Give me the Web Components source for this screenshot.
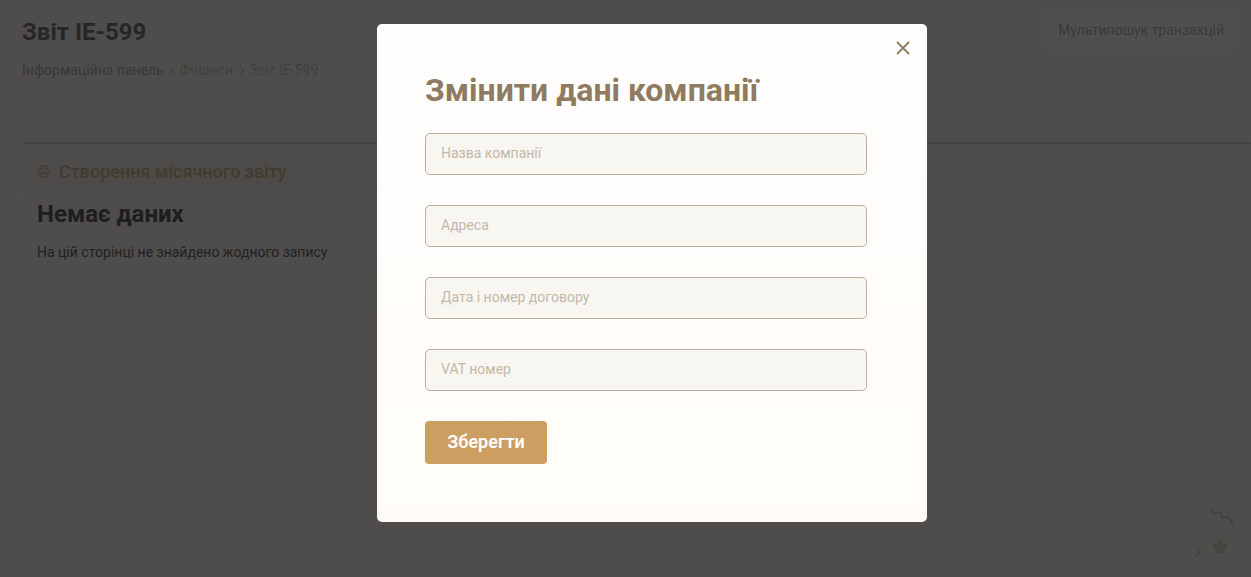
<!DOCTYPE html>
<html lang="uk">
<head>
<meta charset="utf-8">
<title>Звіт IE-599</title>
<style>
  html, body { margin: 0; height: 100%; }
  body { background: #fbf9f5; font-family: Roboto, "Liberation Sans", sans-serif; overflow: hidden; }
</style>
</head>
<body>
<report-page></report-page>
<company-modal></company-modal>

<script>
class PageHeader extends HTMLElement {
  constructor() {
    super();
    this.shadowDOM = this.attachShadow({mode: 'open'});
    this.shadowDOM.innerHTML = `
    <style>
      :host {
        display: flex;
        justify-content: space-between;
        align-items: flex-start;
        height: 142px;
        box-sizing: border-box;
        padding-top: 13px;
      }
      h1 {
        margin: 0;
        font-size: 24px;
        line-height: 38px;
        font-weight: 700;
        color: #7c7c80;
      }
      nav {
        margin-top: 11px;
        display: flex;
        align-items: center;
        gap: 4.5px;
        font-size: 14px;
        line-height: 16px;
        color: #b4b4b2;
      }
      nav .dim { color: #cfccc6; }
      nav svg { display: block; }
      button {
        margin: -1px 11px 0 0;
        width: 198px;
        height: 38px;
        padding: 0 0 2px;
        border: 0;
        border-radius: 6px;
        background: #fff;
        font: 400 14px Roboto, sans-serif;
        color: #bcbab8;
      }
    </style>
    <div>
      <h1>Звіт IE-599</h1>
      <nav>
        <span>Інформаційна панель</span>
        <svg width="7" height="10" viewBox="0 0 7 10" fill="none" stroke="#cfccc6" stroke-width="1.2"><path d="M1.5 1l4 4-4 4"/></svg>
        <span class="dim">Фінанси</span>
        <svg width="7" height="10" viewBox="0 0 7 10" fill="none" stroke="#cfccc6" stroke-width="1.2"><path d="M1.5 1l4 4-4 4"/></svg>
        <span class="dim">Звіт IE-599</span>
      </nav>
    </div>
    <button>Мультипошук транзакцій</button>
    `;
  }
}

class ReportPanel extends HTMLElement {
  constructor() {
    super();
    this.shadowDOM = this.attachShadow({mode: 'open'});
    this.shadowDOM.innerHTML = `
    <style>
      :host { display: block; }
      .head {
        height: 56px;
        box-sizing: border-box;
        border-top: 2px solid #d8d6d2;
        border-radius: 2px;
        background: #f4f2ed;
        padding: 0 15px;
        display: flex;
        align-items: center;
        gap: 9px;
        font-size: 18px;
        font-weight: 500;
        color: #d8bd94;
      }
      svg { display: block; }
      .empty { padding: 1px 15px 0; }
      h2 {
        margin: 0;
        font-size: 24px;
        line-height: 30px;
        font-weight: 700;
        color: #606060;
      }
      p {
        margin: 15px 0 0;
        font-size: 14px;
        line-height: 16px;
        color: #6e6e6e;
      }
    </style>
    <div class="head">
      <svg width="13" height="13" viewBox="0 0 13 13" fill="none" stroke="#d8bd94" stroke-width="1.2">
        <path d="M3.5 4V1.2h6V4"/>
        <rect x="1" y="4" width="11" height="5" rx="1.5"/>
        <path d="M3.5 7.5h6v4.3h-6z"/>
      </svg>
      <span>Створення місячного звіту</span>
    </div>
    <div class="empty">
      <h2>Немає даних</h2>
      <p>На цій сторінці не знайдено жодного запису</p>
    </div>
    `;
  }
}

class ReportPage extends HTMLElement {
  constructor() {
    super();
    this.shadowDOM = this.attachShadow({mode: 'open'});
    this.shadowDOM.innerHTML = `
    <style>
      :host {
        display: block;
        position: relative;
        height: 577px;
        box-sizing: border-box;
        padding-left: 22px;
      }
      .deco { position: absolute; right: 0; bottom: 0; }
    </style>
    <page-header></page-header>
    <report-panel></report-panel>
    <svg class="deco" width="70" height="90" viewBox="0 0 70 90">
      <path d="M29 22l4 5 6-2 3 6 5-1 5 7" fill="none" stroke="#cfcdc0" stroke-width="2"/>
      <path d="M39 50.5l2.8 6 6.6.8-4.9 4.5 1.3 6.5-5.8-3.2-5.8 3.2 1.3-6.5-4.9-4.5 6.6-.8z" fill="#dedccc"/>
      <path d="M17 62l2 4-6 3" fill="none" stroke="#dedccc" stroke-width="1.8"/>
    </svg>
    `;
  }
}

class FormField extends HTMLElement {
  constructor() {
    super();
    this.shadowDOM = this.attachShadow({mode: 'open'});
    this.shadowDOM.innerHTML = `
    <style>
      :host { display: block; }
      input {
        display: block;
        width: 100%;
        height: 42px;
        box-sizing: border-box;
        padding: 0 15px 2px;
        margin: 0;
        border: 1px solid #bdaf9b;
        border-radius: 5px;
        background: #f8f6f0;
        font: 400 14px Roboto, sans-serif;
        outline: none;
      }
      input::placeholder { color: #c4b8a8; opacity: 1; }
    </style>
    <input type="text" placeholder="${this.getAttribute('label')}">
    `;
  }
}

class CompanyModal extends HTMLElement {
  constructor() {
    super();
    this.shadowDOM = this.attachShadow({mode: 'open'});
    this.shadowDOM.innerHTML = `
    <style>
      :host {
        position: fixed;
        inset: 0;
        display: flex;
        justify-content: center;
        align-items: flex-start;
        padding: 24px 0 0 53px;
        box-sizing: border-box;
        background: rgba(0, 0, 0, .69);
      }
      .dialog {
        position: relative;
        width: 550px;
        height: 498px;
        box-sizing: border-box;
        padding: 48px;
        border-radius: 5px;
        background: linear-gradient(#fffefd, #fffcf7);
      }
      .close {
        position: absolute;
        top: 17px;
        right: 17px;
        width: 14px;
        height: 14px;
        display: block;
      }
      h2 {
        margin: 0 0 24px;
        font-size: 32px;
        line-height: 37px;
        font-weight: 700;
        color: #8f7a62;
      }
      form { display: flex; flex-direction: column; gap: 30px; width: 442px; }
      button {
        align-self: flex-start;
        width: 122px;
        height: 43px;
        padding: 0 0 2px;
        border: 0;
        border-radius: 4px;
        background: #cc9e61;
        color: #fff;
        font: 600 18px Roboto, sans-serif;
      }
    </style>
    <div class="dialog">
      <svg class="close" viewBox="0 0 14 14" fill="none" stroke="#8f7a62" stroke-width="1.8"><path d="M1 1l12 12M13 1L1 13"/></svg>
      <h2>Змінити дані компанії</h2>
      <form>
        <form-field label="Назва компанії"></form-field>
        <form-field label="Адреса"></form-field>
        <form-field label="Дата і номер договору"></form-field>
        <form-field label="VAT номер"></form-field>
        <button type="button">Зберегти</button>
      </form>
    </div>
    `;
  }
}

customElements.define('page-header', PageHeader);
customElements.define('report-panel', ReportPanel);
customElements.define('report-page', ReportPage);
customElements.define('form-field', FormField);
customElements.define('company-modal', CompanyModal);
</script>
</body>
</html>
